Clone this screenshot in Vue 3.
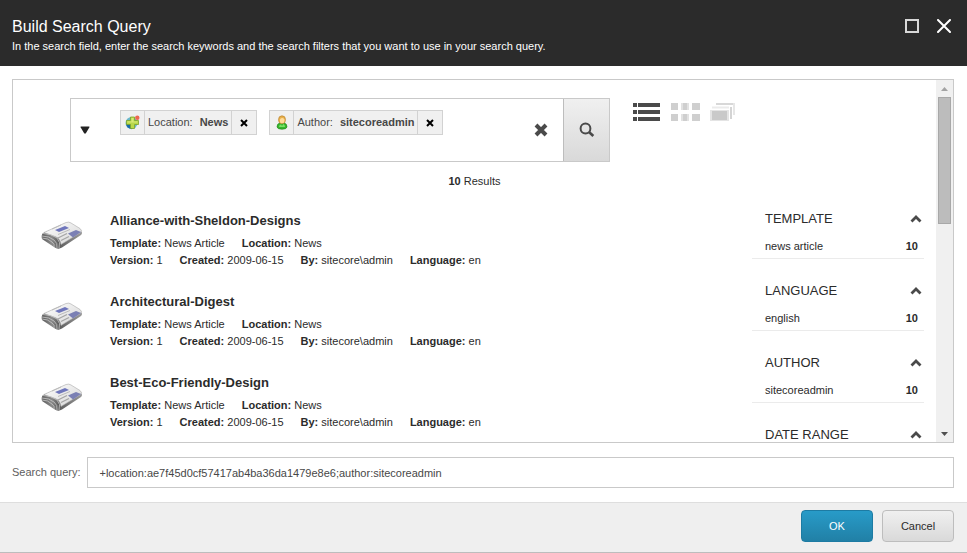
<script setup>
import { ref } from 'vue'

const query = ref('+location:ae7f45d0cf57417ab4ba36da1479e8e6;author:sitecoreadmin')
const filters = [
  { kind: 'location', label: 'Location:', value: 'News' },
  { kind: 'author', label: 'Author:', value: 'sitecoreadmin' }
]
const results = ['Alliance-with-Sheldon-Designs', 'Architectural-Digest', 'Best-Eco-Friendly-Design']
const meta = [
  [['Template:', 'News Article'], ['Location:', 'News']],
  [['Version:', '1'], ['Created:', '2009-06-15'], ['By:', 'sitecore\\admin'], ['Language:', 'en']]
]
const facets = [
  { title: 'TEMPLATE', item: 'news article', count: 10 },
  { title: 'LANGUAGE', item: 'english', count: 10 },
  { title: 'AUTHOR', item: 'sitecoreadmin', count: 10 },
  { title: 'DATE RANGE' }
]
</script>

<template>
  <div class="dialog">
    <header class="top">
      <div>
        <h1>Build Search Query</h1>
        <p>In the search field, enter the search keywords and the search filters that you want to use in your search query.</p>
      </div>
      <div class="window-actions">
        <button type="button" aria-label="Maximize">
          <svg width="14" height="14" viewBox="0 0 14 14"><rect x="1" y="1" width="12" height="12" fill="none" stroke="#d8d8d8" stroke-width="2" /></svg>
        </button>
        <button type="button" aria-label="Close">
          <svg width="14" height="14" viewBox="0 0 14 14"><path d="M1 1L13 13M13 1L1 13" stroke="#fff" stroke-width="2" stroke-linecap="round" /></svg>
        </button>
      </div>
    </header>

    <main>
      <section class="panel">
        <div class="content">
          <div class="search-row">
            <div class="search-box">
              <button type="button" class="options" aria-label="Search options">
                <svg width="10" height="8" viewBox="0 0 10 8"><path d="M1 .5H9Q9.800 .5 9.300 1.400L6 7Q5 8.400 4 7L.7 1.400Q.2 .5 1 .5Z" fill="#222" /></svg>
              </button>
              <div class="tags">
                <div v-for="f in filters" :key="f.kind" class="tag">
                  <span class="tag-icon">
                    <svg v-if="f.kind === 'location'" width="15" height="15" viewBox="0 0 15 15">
                      <circle cx="6.500" cy="8" r="6" fill="#69b7c9" />
                      <path d="M1 8.500Q1.500 13.500 7 14.200L6 9Z" fill="#1769a8" />
                      <path d="M5.500 2H9.500V5.500H13.500V9.500H9.500V13.500H5.500V9.500H1.500V5.500H5.500Z" fill="#b9d84a" stroke="#7da32a" stroke-width=".8" />
                      <path d="M6.500 3H8.500V6.500H12.500V7.500H2.500V6.500H6.500Z" fill="#d8e978" />
                      <circle cx="12.300" cy="2.700" r="2.200" fill="#ed6750" />
                    </svg>
                    <svg v-else width="12" height="15" viewBox="0 0 12 15">
                      <path d="M1 12Q1 8.500 4 8H8Q11 8.500 11 12Q10.500 14.200 6 14.200T1 12Z" fill="#36b72c" stroke="#23851d" stroke-width=".7" />
                      <path d="M3 12Q3 9.500 5 9.500L6 11L7.500 9Q9 10 9 12Z" fill="#7be067" />
                      <ellipse cx="6" cy="4.700" rx="3.500" ry="3.900" fill="#e8b04a" stroke="#b98432" stroke-width=".7" />
                      <ellipse cx="6.200" cy="5.700" rx="2.300" ry="2.600" fill="#ffdc9b" />
                    </svg>
                  </span>
                  <span class="tag-text">{{ f.label }}<b>{{ f.value }}</b></span>
                  <button type="button" class="tag-remove" :aria-label="'Remove ' + f.value">
                    <svg width="8" height="8" viewBox="0 0 8 8"><path d="M1 1L7 7M7 1L1 7" stroke="#000" stroke-width="2" /></svg>
                  </button>
                </div>
              </div>
              <button type="button" class="clear" aria-label="Clear search">
                <svg width="14" height="14" viewBox="0 0 14 14"><path d="M2 2L12 12M12 2L2 12" stroke="#4a4a4a" stroke-width="4" /></svg>
              </button>
              <button type="button" class="go" aria-label="Search">
                <svg width="16" height="16" viewBox="0 0 16 16" fill="none" stroke="#4a4a4a"><circle cx="6.500" cy="6.500" r="4.900" stroke-width="2" /><path d="M10 10L14.300 14" stroke-width="2.600" /></svg>
              </button>
            </div>
            <div class="views">
              <button type="button" aria-label="List view">
                <svg width="28" height="18" viewBox="0 0 28 18" fill="#4a4a4a"><path d="M0 0H4V4H0ZM0 7H4V11H0ZM0 14H4V18H0Z" /><path d="M5 0H27V4H5ZM5 7H27V11H5ZM5 14H27V18H5Z" /></svg>
              </button>
              <button type="button" aria-label="Grid view">
                <svg width="29" height="18" viewBox="0 0 29 18" fill="#cfcfcf"><path d="M0 0H7V7H0ZM12 0H16V7H12ZM21 0H29V7H21ZM0 11H7V18H0ZM12 11H16V18H12ZM21 11H29V18H21Z" /><path d="M10 0H12V7H10ZM16 0H18V7H16ZM10 11H12V18H10ZM16 11H18V18H16Z" fill="#e2e2e2" /></svg>
              </button>
              <button type="button" aria-label="Gallery view">
                <svg width="26" height="18" viewBox="0 0 26 18"><path d="M0 7H19V18H0Z" fill="#e4e4e4" /><path d="M2 8H17V17H2Z" fill="#c9c9c9" /><path d="M2 4.500H19" stroke="#ebebeb" stroke-width="2" /><path d="M21 4V16" stroke="#d4d4d4" stroke-width="2" /><path d="M6 1H24" stroke="#d8d8d8" stroke-width="2" /><path d="M24 0V12" stroke="#e6e6e6" stroke-width="2" /></svg>
              </button>
            </div>
          </div>

          <div class="count"><b>10</b> Results</div>

          <div class="columns">
            <ul class="results">
              <li v-for="r in results" :key="r">
                <svg class="paper" width="42" height="30" viewBox="0 0 42 30">
                  <defs>
                    <linearGradient id="edge" x1="0" y1="0" x2="1" y2="0"><stop offset="0" stop-color="#5a5a5a" /><stop offset=".25" stop-color="#8a8a8a" /><stop offset=".42" stop-color="#5c5c5c" /><stop offset="1" stop-color="#9a9a9a" /></linearGradient>
                    <linearGradient id="sheet" x1="0" y1="0" x2="1" y2="1"><stop offset="0" stop-color="#fff" /><stop offset="1" stop-color="#d4d4d4" /></linearGradient>
                  </defs>
                  <path d="M2 12Q0 14 1 18L13 26Q17 29 21 26.500L40 14Q42 12 40 10L28 2Z" fill="url(#edge)" />
                  <path d="M3 11.500L25 1.500Q28 .5 30 2L39 7.500Q42 9.500 39 12L20 23.500Q19 17 14 15.500L3 11.500Z" fill="url(#sheet)" stroke="#aaa" stroke-width=".6" />
                  <path d="M1 15Q8 15 13 19Q17 22 16 27M1 17Q7 17 11 21Q14 23 13 26M2 12.500Q10 12.500 16 17Q20 21 18 27" fill="none" stroke="#c8c8c8" stroke-width=".8" />
                  <path d="M14 9L24 5L28 7L18 11Z" fill="#6f76bb" />
                  <path d="M27 12.500L35 9L40 11L32 16.500Z" fill="#7b80b4" />
                  <path d="M11 8L20 4M17 13.500L29 8.500" fill="none" stroke="#bbb" stroke-width="1" />
                  <path d="M17 17L26 12.500M20 19.500L28 15.500" fill="none" stroke="#a5a5a5" stroke-width="1.300" />
                </svg>
                <div class="result-body">
                  <h2><a href="#">{{ r }}</a></h2>
                  <p v-for="(line, i) in meta" :key="i"><span v-for="m in line" :key="m[0]"><b>{{ m[0] }}</b> {{ m[1] }}</span></p>
                </div>
              </li>
            </ul>
            <aside class="facets">
              <section v-for="f in facets" :key="f.title">
                <h3>{{ f.title }}
                  <button type="button" :aria-label="'Collapse ' + f.title">
                    <svg width="12" height="8" viewBox="0 0 12 8"><path d="M1.500 6.500L6 2L10.500 6.500" fill="none" stroke="#4a4a4a" stroke-width="2.800" /></svg>
                  </button>
                </h3>
                <a v-if="f.item" href="#">{{ f.item }}<b>{{ f.count }}</b></a>
              </section>
            </aside>
          </div>
        </div>
        <div class="scrollbar" aria-hidden="true">
          <svg width="7" height="4" viewBox="0 0 7 4"><path d="M0 4L3.500 0L7 4Z" fill="#a3a3a3" /></svg>
          <div class="track"><div class="thumb"></div></div>
          <svg width="7" height="4" viewBox="0 0 7 4"><path d="M0 0L3.500 4L7 0Z" fill="#505050" /></svg>
        </div>
      </section>

      <div class="query">
        <label for="query">Search query:</label>
        <input id="query" v-model="query" type="text" />
      </div>
    </main>

    <footer>
      <button type="button" class="primary">OK</button>
      <button type="button">Cancel</button>
    </footer>
  </div>
</template>

<style>
body {
  margin: 0;
}
</style>

<style scoped>
.dialog, .dialog * {
  box-sizing: border-box;
}
.dialog {
  display: flex;
  flex-direction: column;
  height: 100vh;
  background: #fff;
  color: #2b2b2b;
  font: 11px/17px "Liberation Sans", Arial, sans-serif;
}
h1, h2, h3, p, ul {
  margin: 0;
  padding: 0;
}
button {
  margin: 0;
  padding: 0;
  border: 0;
  background: none;
  font: inherit;
  color: inherit;
}
svg {
  display: block;
  flex: none;
}
a {
  color: inherit;
  text-decoration: none;
}
.top {
  display: flex;
  justify-content: space-between;
  padding: 16px 16px 11px 12px;
  background: #2b2b2b;
  color: #fff;
}
h1 {
  padding-bottom: 1px;
  font-size: 16px;
  line-height: 21px;
  font-weight: 400;
}
.window-actions {
  display: flex;
  align-items: flex-start;
  gap: 18px;
  padding-top: 3px;
}
main {
  flex: 1;
  min-height: 0;
  display: flex;
  flex-direction: column;
  gap: 14px;
  padding: 13px 13px 14px 12px;
}
.panel {
  flex: 1;
  min-height: 0;
  display: flex;
  border: 1px solid #c9c9c9;
}
.content {
  flex: 1;
  min-width: 0;
  overflow: hidden;
}
.search-row {
  display: flex;
  gap: 23px;
  padding: 18px 0 0 57px;
}
.search-box {
  display: flex;
  flex: 0 1 540px;
  height: 64px;
  border: 1px solid #c9c9c9;
}
.options {
  display: flex;
  align-items: center;
  width: 49px;
  padding-left: 9px;
}
.tags {
  flex: 1;
  display: flex;
  align-items: flex-start;
  gap: 12px;
  padding-top: 11px;
}
.tag {
  display: flex;
  height: 25px;
  border: 1px solid #d2d2d2;
  background: #f0f0f0;
  color: #474747;
}
.tag-icon, .tag-remove {
  display: flex;
  align-items: center;
  justify-content: center;
  width: 24px;
}
.tag-icon {
  border-right: 1px solid #d2d2d2;
}
.tag-remove {
  width: 25px;
  border-left: 1px solid #d2d2d2;
}
.tag-text {
  display: flex;
  gap: 7px;
  padding: 0 3px;
  line-height: 23px;
}
.clear {
  display: flex;
  align-items: center;
  justify-content: center;
  width: 45px;
}
.go {
  display: flex;
  align-items: center;
  justify-content: center;
  width: 46px;
  border-left: 1px solid #bdbdbd;
  background: linear-gradient(#f0f0f0, #d9d9d9);
}
.views {
  display: flex;
  align-items: flex-start;
  gap: 10px;
  padding-top: 5px;
}
.count {
  padding-top: 11px;
  text-align: center;
}
.columns {
  display: flex;
  justify-content: space-between;
  padding: 20px 12px 0 28px;
}
.results {
  list-style: none;
}
.results li {
  display: flex;
  gap: 27px;
  height: 81px;
}
.paper {
  margin-top: 11px;
}
h2 {
  padding: 1px 0 4px;
  font-size: 13px;
  line-height: 20px;
}
.result-body p {
  display: flex;
  gap: 17px;
}
.facets {
  width: 172px;
}
.facets section {
  margin-bottom: 23px;
  padding-bottom: 3px;
  border-bottom: 1px solid #ebebeb;
}
h3 {
  display: flex;
  align-items: center;
  justify-content: space-between;
  padding: 0 2px 11px 13px;
  font-size: 13px;
  line-height: 17px;
  font-weight: 400;
}
.facets a {
  display: flex;
  justify-content: space-between;
  padding: 0 6px 0 13px;
}
.scrollbar {
  display: flex;
  flex-direction: column;
  align-items: center;
  width: 17px;
  padding: 7px 0 6px;
  background: #f0f0f0;
}
.track {
  flex: 1;
  align-self: stretch;
  padding: 6px 2px 0;
}
.thumb {
  height: 38%;
  border: 1px solid #a8a8a8;
  background: #bcbcbc;
}
.query {
  display: flex;
  align-items: center;
  gap: 7px;
  color: #5e5e5e;
}
.query input {
  flex: 1;
  min-width: 0;
  height: 31px;
  padding: 0 11px;
  border: 1px solid #c9c9c9;
  border-radius: 0;
  background: #fff;
  color: #474747;
  font: inherit;
}
footer {
  display: flex;
  justify-content: flex-end;
  gap: 9px;
  padding: 7px 13px 10px;
  border-top: 1px solid #dedede;
  border-bottom: 1px solid #bdbdbd;
  background: #efefef;
}
footer button {
  width: 72px;
  height: 32px;
  border: 1px solid #bdbdbd;
  border-radius: 4px;
  background: linear-gradient(#f0f0f0, #d9d9d9);
}
footer .primary {
  border-color: #1d7ba3;
  background: linear-gradient(#289bc8, #2180a6);
  color: #fff;
}
</style>
